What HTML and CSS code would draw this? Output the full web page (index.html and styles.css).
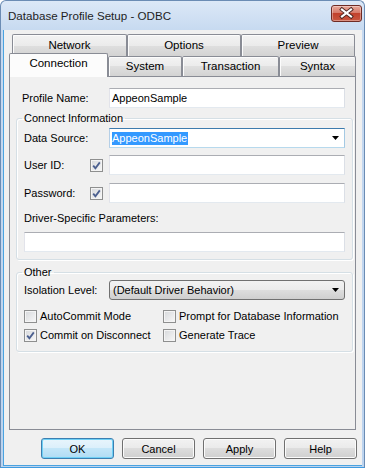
FILE: index.html
```html
<!DOCTYPE html>
<html lang="en">
  <head>
    <meta charset="UTF-8" />
    <meta name="viewport" content="width=device-width, initial-scale=1.0" />
    <title>Database Profile Setup - ODBC</title>
    <link rel="stylesheet" href="styles.css">
  </head>
  <body>
    <div class="window">
      <div class="titlebar">
        <span class="title">Database Profile Setup - ODBC</span>
        <div class="close-btn">
          <svg width="29" height="15" viewBox="0 0 29 15">
            <path d="M10 3.5 L19 10.5 M19 3.5 L10 10.5" stroke="#4a2420" stroke-width="4" stroke-linecap="square" />
            <path d="M10 3.5 L19 10.5 M19 3.5 L10 10.5" stroke="#fff" stroke-width="2.2" stroke-linecap="square" />
          </svg>
        </div>
      </div>

      <div class="client">
        <div class="tab-row tab-row-back">
          <div class="tab tab-network">Network</div>
          <div class="tab tab-options">Options</div>
          <div class="tab tab-preview">Preview</div>
        </div>
        <div class="tab-row tab-row-front">
          <div class="tab tab-active tab-connection">Connection</div>
          <div class="tab tab-system">System</div>
          <div class="tab tab-transaction">Transaction</div>
          <div class="tab tab-syntax">Syntax</div>
        </div>

        <div class="panel">
          <div class="row row-profile">
            <span class="label label-profile">Profile Name:</span>
            <div class="field">AppeonSample</div>
          </div>

          <fieldset class="group group-connect">
            <legend>Connect Information</legend>
            <div class="row row-first">
              <span class="label">Data Source:</span>
              <div class="field combo combo-focus">
                <span class="selected-text">AppeonSample</span>
                <svg class="arrow" width="7" height="4" viewBox="0 0 7 4"><path d="M0 0 H7 L3.5 4 Z" fill="#000" /></svg>
              </div>
            </div>
            <div class="row row-user">
              <span class="label label-short">User ID:</span>
              <span class="checkbox">
                <svg width="11" height="11" viewBox="0 0 11 11"><path d="M2.2 5.6 L4.4 8.2 L8.8 2.4" fill="none" stroke="#4b5f8f" stroke-width="1.8" /></svg>
              </span>
              <div class="field"></div>
            </div>
            <div class="row row-password">
              <span class="label label-short">Password:</span>
              <span class="checkbox">
                <svg width="11" height="11" viewBox="0 0 11 11"><path d="M2.2 5.6 L4.4 8.2 L8.8 2.4" fill="none" stroke="#4b5f8f" stroke-width="1.8" /></svg>
              </span>
              <div class="field"></div>
            </div>
            <div class="text-line">Driver-Specific Parameters:</div>
            <div class="field field-wide"></div>
          </fieldset>

          <fieldset class="group group-other">
            <legend>Other</legend>
            <div class="row row-first row-isolation">
              <span class="label">Isolation Level:</span>
              <div class="field dropdown">
                <span>(Default Driver Behavior)</span>
                <svg class="arrow" width="7" height="4" viewBox="0 0 7 4"><path d="M0 0 H7 L3.5 4 Z" fill="#000" /></svg>
              </div>
            </div>
            <div class="check-row check-row-first">
              <div class="check-item check-col1">
                <span class="checkbox"></span>
                <span>AutoCommit Mode</span>
              </div>
              <div class="check-item">
                <span class="checkbox"></span>
                <span>Prompt for Database Information</span>
              </div>
            </div>
            <div class="check-row">
              <div class="check-item check-col1">
                <span class="checkbox">
                  <svg width="11" height="11" viewBox="0 0 11 11"><path d="M2.2 5.6 L4.4 8.2 L8.8 2.4" fill="none" stroke="#4b5f8f" stroke-width="1.8" /></svg>
                </span>
                <span>Commit on Disconnect</span>
              </div>
              <div class="check-item">
                <span class="checkbox"></span>
                <span>Generate Trace</span>
              </div>
            </div>
          </fieldset>
        </div>

        <div class="buttons">
          <button class="btn btn-default">OK</button>
          <button class="btn">Cancel</button>
          <button class="btn">Apply</button>
          <button class="btn">Help</button>
        </div>
      </div>
    </div>
  </body>
</html>
```

FILE: styles.css
```css
* {
  box-sizing: border-box;
}
body {
  margin: 0;
  padding: 0;
  background-color: #fff;
  font-family: "Liberation Sans", Arial, sans-serif;
  font-size: 11px;
  color: #000;
}
.window {
  width: 365px;
  height: 468px;
  display: flex;
  flex-direction: column;
  padding: 0 2px 1px 2px;
  border: 1px solid #6b8cb4;
  border-bottom-color: #3f9be0;
  border-radius: 6px 6px 0 0;
  background: linear-gradient(#dce8f7, #c6d9f0 30px, #bcd3ee);
}
.titlebar {
  height: 29px;
  display: flex;
  align-items: flex-start;
  flex-shrink: 0;
  padding-left: 5px;
}
.title {
  margin-top: 8px;
  font-size: 11.6px;
  color: #1e1e1e;
}
.close-btn {
  margin-left: auto;
  margin-top: 4px;
  margin-right: 0;
  width: 31px;
  height: 17px;
  border: 1px solid #6f2b24;
  border-radius: 3px;
  background: linear-gradient(#e8a89a, #d77b6a 45%, #c2412c 50%, #c95740);
  box-shadow: inset 0 0 0 1px rgba(255, 255, 255, 0.35);
  display: flex;
  align-items: center;
  justify-content: center;
}
.client {
  flex: 1;
  display: flex;
  flex-direction: column;
  padding-top: 4px;
  background-color: #f0f0f0;
  border-left: 1px solid #4aa3e0;
  border-bottom: 1px solid #4aa3e0;
}
.tab-row {
  display: flex;
}
.tab-row-back {
  height: 22px;
  margin-left: 8px;
}
.tab-row-front {
  height: 20px;
  margin-left: 5px;
  align-items: flex-end;
}
.tab {
  height: 100%;
  border: 1px solid #898c95;
  border-bottom: none;
  border-radius: 2px 2px 0 0;
  background: linear-gradient(#f3f3f3, #ebebeb 50%, #dfdfdf 50%, #d3d3d3);
  box-shadow: inset 1px 1px 0 #fcfcfc;
  text-align: center;
  line-height: 20px;
  font-size: 11.5px;
  color: #000;
}
.tab-row-front .tab {
  line-height: 18px;
}
.tab-network {
  width: 115px;
}
.tab-options {
  width: 114px;
}
.tab-preview {
  width: 114px;
}
.tab-connection {
  width: 99px;
}
.tab-system {
  width: 74px;
}
.tab-transaction {
  width: 97px;
}
.tab-syntax {
  width: 77px;
}
.tab-row-front .tab-active {
  position: relative;
  z-index: 1;
  height: 24px;
  margin-bottom: -1px;
  line-height: 19px;
  background: #fcfcfc;
  box-shadow: none;
}
.panel {
  width: 347px;
  height: 354px;
  margin-left: 5px;
  border: 1px solid #898c95;
  background-color: #f0f0f0;
  display: flex;
  flex-direction: column;
}
.row {
  display: flex;
  align-items: center;
  height: 20px;
}
.row-profile {
  margin-top: 11px;
  padding-left: 12px;
}
.label {
  width: 85px;
  flex-shrink: 0;
}
.label-profile {
  width: 87px;
}
.label-short {
  width: 66px;
}
.field {
  width: 236px;
  height: 20px;
  background-color: #fff;
  border: 1px solid #abadb3;
  border-color: #abadb3 #dbdfe6 #e3e9ef #e2e3ea;
  padding-left: 2px;
  display: flex;
  align-items: center;
}
.field-wide {
  width: 321px;
  margin-top: 6px;
}
.combo-focus {
  border-color: #3d7bad #a4c9e3 #b7d9ed #b5cfe7;
}
.selected-text {
  background-color: #3399ff;
  color: #fff;
  line-height: 13px;
  padding-right: 1px;
}
.arrow {
  margin-left: auto;
  margin-right: 5px;
}
.dropdown {
  border: 1px solid #707070;
  border-radius: 3px;
  padding-left: 3px;
  background: linear-gradient(#f2f2f2, #ebebeb 50%, #dddddd 50%, #cfcfcf);
}
.group {
  margin: 3px 2px 0 6px;
  padding: 0 7px 7px 7px;
  min-width: 0;
  width: 337px;
  border: 1px solid #d5dfe5;
  border-radius: 3px;
  box-shadow: inset 1px 1px 0 #fff, 1px 1px 0 #fff;
}
.group legend {
  padding: 0 2px;
  margin-left: -2px;
  line-height: 15px;
}
.row-first {
  margin-top: 2px;
}
.row-isolation {
  margin-top: 0;
}
.row-user {
  margin-top: 7px;
}
.row-password {
  margin-top: 8px;
}
.text-line {
  margin-top: 8px;
  line-height: 15px;
}
.group-other {
  margin-top: 5px;
  padding-bottom: 9px;
}
.checkbox {
  width: 13px;
  height: 13px;
  flex-shrink: 0;
  margin-right: 6px;
  border: 1px solid #8e8f8f;
  background: linear-gradient(135deg, #d6d8db, #f8f8f8);
  box-shadow: inset 0 0 0 1px #f4f4f4;
  display: flex;
  align-items: center;
  justify-content: center;
}
.check-row {
  display: flex;
  height: 14px;
  margin-top: 5px;
}
.check-row-first {
  margin-top: 9px;
}
.check-item {
  display: flex;
  align-items: center;
}
.check-item .checkbox {
  margin-right: 3px;
}
.check-col1 {
  width: 139px;
}
.buttons {
  display: flex;
  justify-content: flex-end;
  gap: 8px;
  margin-top: 8px;
  margin-right: 5px;
}
.btn {
  width: 73px;
  height: 21px;
  padding: 0;
  font-family: inherit;
  font-size: 11px;
  color: #000;
  border: 1px solid #707070;
  border-radius: 3px;
  background: linear-gradient(#f2f2f2, #ebebeb 45%, #dddddd 50%, #cfcfcf);
  box-shadow: inset 0 0 0 1px #fbfbfb;
}
.btn-default {
  border-color: #3c7fb1;
  background: linear-gradient(#e8f5fc, #dcf0fb 45%, #c3e6f8 50%, #b0dcf4);
  box-shadow: inset 0 0 0 1px #6fd0f5;
}
```
